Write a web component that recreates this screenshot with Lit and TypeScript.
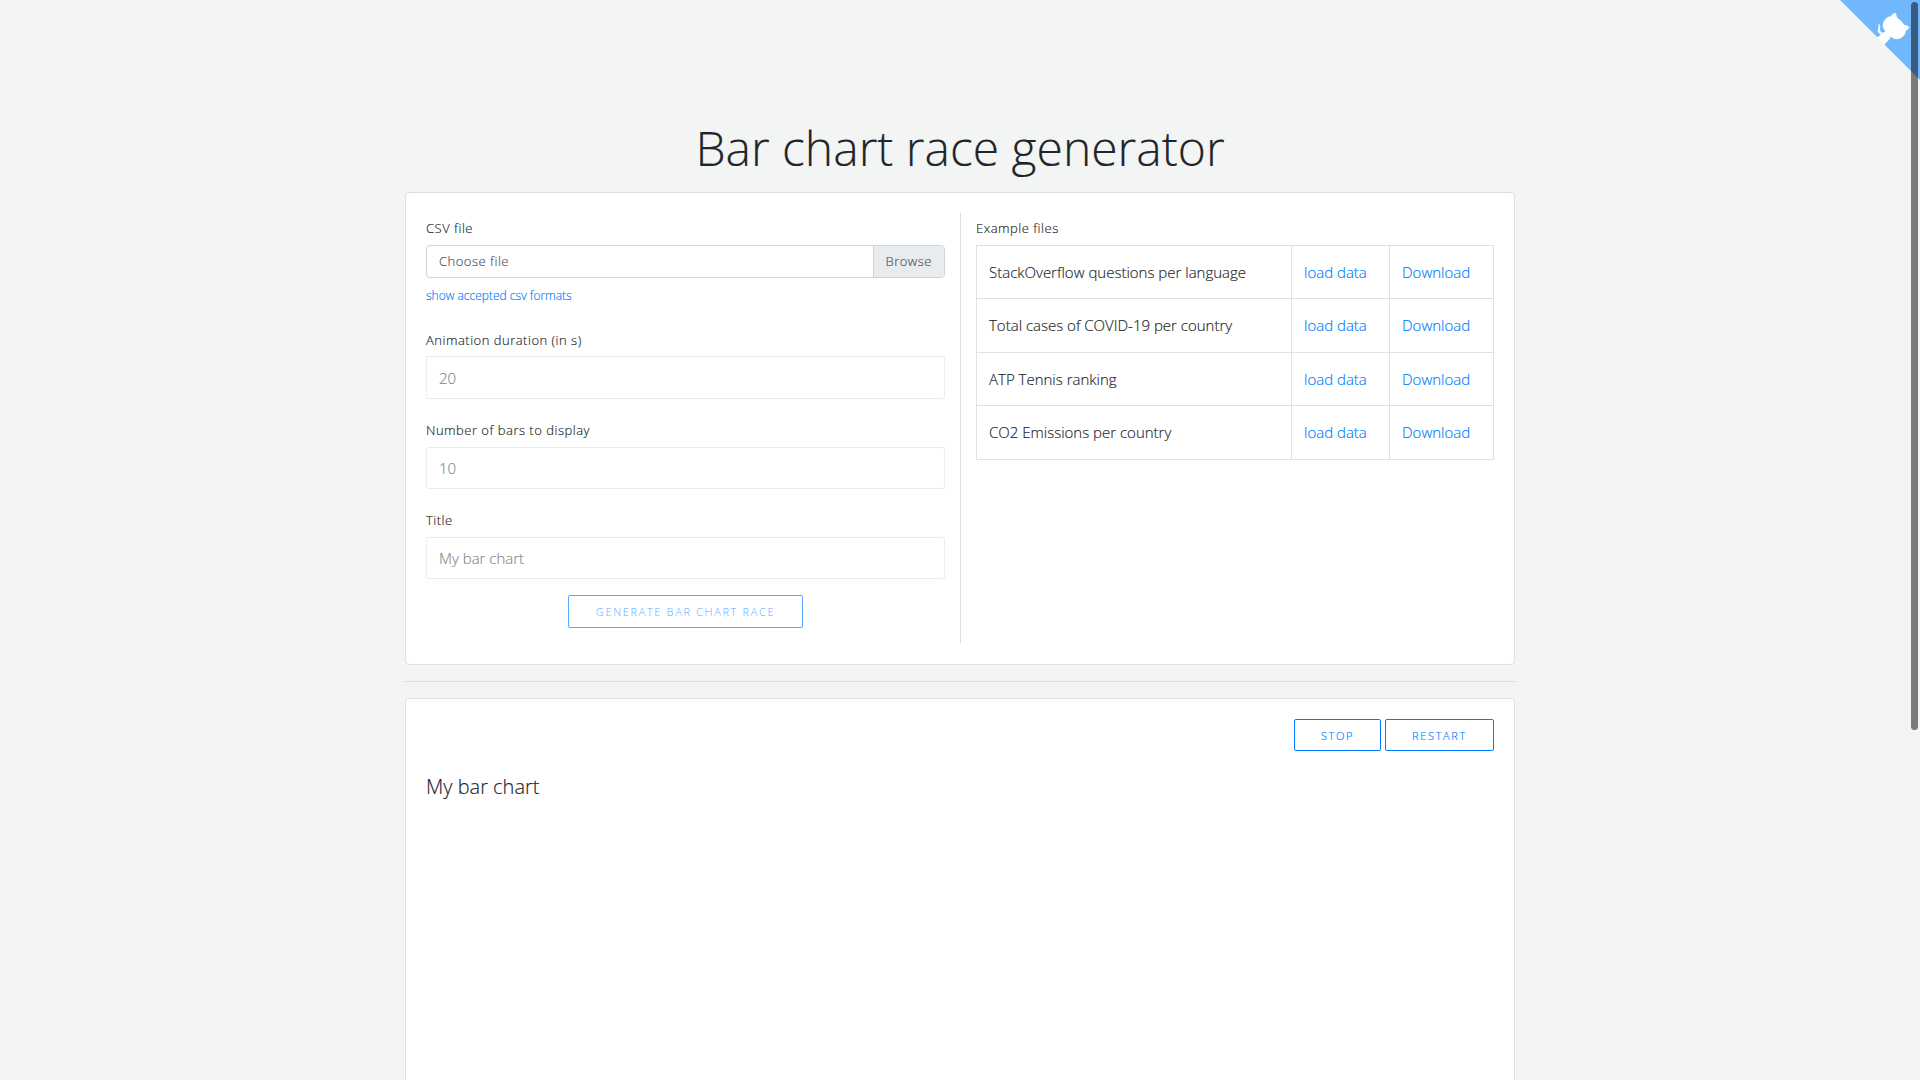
import { LitElement, html, css } from "lit";
import { customElement } from "lit/decorators.js";

const files = [
  "StackOverflow questions per language",
  "Total cases of COVID-19 per country",
  "ATP Tennis ranking",
  "CO2 Emissions per country",
];

@customElement("app-root")
export class AppRoot extends LitElement {
  static styles = css`
    :host {
      display: block;
      height: 1080px;
      overflow: hidden;
      position: relative;
      background: #f3f5f4;
      color: #212529;
      font: 300 15px/1.5 "Open Sans", sans-serif;
      -webkit-text-stroke: 0.15px;
    }
    * { box-sizing: border-box; }
    .corner { position: absolute; top: 0; right: 0; display: block; fill: #70b7fd; }
    .cat { fill: #fff; }
    .thumb { position: absolute; top: 2px; right: 2px; width: 7px; height: 728px; border-radius: 4px; background: rgba(0, 0, 0, 0.5); }
    .container { width: 1110px; margin: 0 auto; padding-top: 119px; }
    h1 { margin: 0 0 15px; height: 58px; line-height: 58px; font-size: 48px; font-weight: 300; text-align: center; white-space: nowrap; }
    .card { background: #fff; border: 1px solid #dbe0e3; border-radius: 4px; padding: 20px; }
    .setup { height: 473px; display: grid; grid-template-columns: 534px 1fr; }
    .form { border-right: 1px solid #dbdfe3; padding-right: 15px; width: 535px; height: 430px; }
    .examples { padding-left: 16px; }
    .label { display: block; height: 32px; line-height: 30px; font-size: 13px; letter-spacing: 0.5px; color: #212529; }
    .file { display: flex; height: 33px; border: 1px solid #ced4da; border-radius: 4px; overflow: hidden; font-size: 13px; line-height: 31px; letter-spacing: 0.5px; color: #495057; }
    .file-name { flex: 1; padding-left: 12px; }
    .browse { width: 71px; padding-left: 11.5px; background: #e9ecef; border-left: 1px solid #ced4da; }
    a { color: #007bff; text-decoration: none; }
    .formats { display: block; height: 36px; line-height: 36px; font-size: 12px; margin-bottom: 11px; }
    .input { display: block; width: 100%; height: 42px; margin-bottom: 16px; padding: 0 12px; border: 1px solid #e9edf0; border-radius: 2px; font: inherit; background: #fff; }
    .input.tall { height: 43px; }
    .input::placeholder { color: #888; opacity: 1; }
    .label.first { height: 31px; }
    .btn { height: 32px; padding: 0; border: 1px solid #007bff; border-radius: 2px; background: #fff; color: #007bff; font: 300 11px/30px "Open Sans", sans-serif; letter-spacing: 1.65px; text-transform: uppercase; white-space: nowrap; }
    .btn.generate { display: block; width: 235px; height: 33px; margin: 0 auto; opacity: 0.65; -webkit-text-stroke: 0; }
    .table { width: 518px; border-collapse: collapse; table-layout: fixed; }
    .table td { height: 54px; border: 1px solid #dee2e6; padding: 0 12px; white-space: nowrap; }
    .table tr:nth-child(odd) td { height: 53px; }
    .c1 { width: 315px; }
    .c2 { width: 98px; }
    .rule { height: 1px; margin: 16px 0; background: #d9dcdc; }
    .chart { height: 500px; }
    .actions { display: flex; justify-content: flex-end; gap: 4px; }
    .actions .btn { padding-top: 1px; line-height: 29px; }
    .stop { width: 87px; }
    .restart { width: 109px; }
    .chart-title { margin-top: 21px; font-size: 20px; line-height: 30px; }
  `;

  render() {
    return html`
      <div class="container">
        <h1>Bar chart race generator</h1>
        <div class="card setup">
          <div class="form">
            <span class="label">CSV file</span>
            <div class="file"><span class="file-name">Choose file</span><span class="browse">Browse</span></div>
            <a class="formats">show accepted csv formats</a>
            <label class="label first">Animation duration (in s)</label>
            <input class="input tall" placeholder="20" />
            <label class="label">Number of bars to display</label>
            <input class="input" placeholder="10" />
            <label class="label">Title</label>
            <input class="input" placeholder="My bar chart" />
            <button class="btn generate">Generate bar chart race</button>
          </div>
          <div class="examples">
            <span class="label">Example files</span>
            <table class="table">
              <colgroup><col class="c1" /><col class="c2" /><col /></colgroup>
              <tbody>
                ${files.map((f) => html`<tr><td>${f}</td><td><a>load data</a></td><td><a>Download</a></td></tr>`)}
              </tbody>
            </table>
          </div>
        </div>
        <div class="rule"></div>
        <div class="card chart">
          <div class="actions">
            <button class="btn stop">Stop</button>
            <button class="btn restart">Restart</button>
          </div>
          <div class="chart-title">My bar chart</div>
        </div>
      </div>
      <svg class="corner" width="80" height="80" viewBox="0 0 250 250">
        <path d="M0,0 L115,115 L130,115 L142,142 L250,250 L250,0 Z" />
        <path class="cat" d="M128.3,109.0 C113.8,99.7 119.0,89.6 119.0,89.6 C122.0,82.7 120.5,78.6 120.5,78.6 C119.2,72.0 123.4,76.3 123.4,76.3 C127.3,80.9 125.5,87.3 125.5,87.3 C122.9,97.6 130.6,101.9 134.4,103.2" />
        <path class="cat" d="M115.0,115.0 C114.9,115.1 118.7,116.5 119.8,115.4 L133.7,101.6 C136.9,99.2 139.9,98.4 142.2,98.6 C133.8,88.0 127.5,74.4 143.8,58.0 C148.5,53.4 154.0,51.2 159.7,51.0 C160.3,49.4 163.2,43.6 171.4,40.1 C171.4,40.1 176.1,42.5 178.8,56.2 C183.1,58.6 187.2,61.8 190.9,65.4 C194.5,69.0 197.7,73.2 200.1,77.6 C213.8,80.2 216.3,84.9 216.3,84.9 C212.7,93.1 206.9,96.0 205.4,96.6 C205.1,102.4 203.0,107.8 198.3,112.5 C181.9,128.9 168.3,122.5 157.7,114.1 C157.9,116.9 156.7,120.9 152.7,124.9 L141.0,136.5 C139.8,137.7 141.6,141.9 141.8,141.8 Z" />
      </svg>
      <div class="thumb"></div>
    `;
  }
}
